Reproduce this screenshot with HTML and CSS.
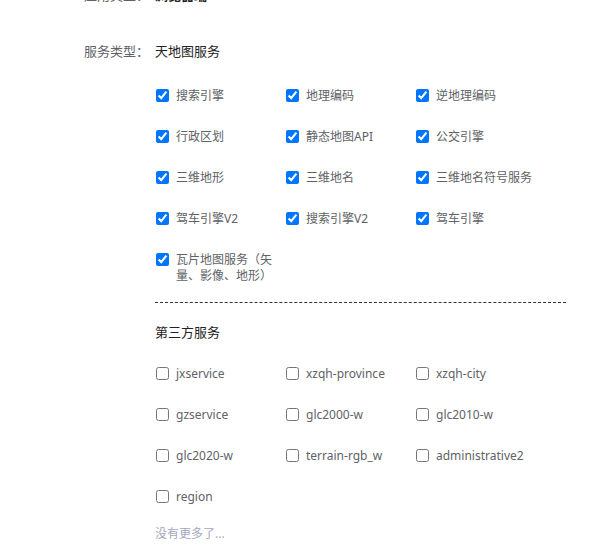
FILE: index.html
```html
<!DOCTYPE html>
<html lang="zh-CN">
<head>
<meta charset="utf-8">
<title>服务类型</title>
<link rel="stylesheet" href="styles.css">
</head>
<body>
<div class="form">
  <div class="field field-top">
    <div class="label">应用类型：</div>
    <div class="value strong">浏览器端</div>
  </div>

  <div class="field field-main">
    <div class="label">服务类型：</div>
    <div class="value">
      <div class="title">天地图服务</div>
      <div class="grid">
        <label class="cb"><input type="checkbox" checked><span>搜索引擎</span></label>
        <label class="cb"><input type="checkbox" checked><span>地理编码</span></label>
        <label class="cb"><input type="checkbox" checked><span>逆地理编码</span></label>
        <label class="cb"><input type="checkbox" checked><span>行政区划</span></label>
        <label class="cb"><input type="checkbox" checked><span>静态地图API</span></label>
        <label class="cb"><input type="checkbox" checked><span>公交引擎</span></label>
        <label class="cb"><input type="checkbox" checked><span>三维地形</span></label>
        <label class="cb"><input type="checkbox" checked><span>三维地名</span></label>
        <label class="cb"><input type="checkbox" checked><span>三维地名符号服务</span></label>
        <label class="cb"><input type="checkbox" checked><span>驾车引擎V2</span></label>
        <label class="cb"><input type="checkbox" checked><span>搜索引擎V2</span></label>
        <label class="cb"><input type="checkbox" checked><span>驾车引擎</span></label>
        <label class="cb"><input type="checkbox" checked><span>瓦片地图服务（矢量、影像、地形）</span></label>
      </div>
      <div class="divider"></div>
      <div class="title title-third">第三方服务</div>
      <div class="grid grid-third">
        <label class="cb"><input type="checkbox"><span>jxservice</span></label>
        <label class="cb"><input type="checkbox"><span>xzqh-province</span></label>
        <label class="cb"><input type="checkbox"><span>xzqh-city</span></label>
        <label class="cb"><input type="checkbox"><span>gzservice</span></label>
        <label class="cb"><input type="checkbox"><span>glc2000-w</span></label>
        <label class="cb"><input type="checkbox"><span>glc2010-w</span></label>
        <label class="cb"><input type="checkbox"><span>glc2020-w</span></label>
        <label class="cb"><input type="checkbox"><span>terrain-rgb_w</span></label>
        <label class="cb"><input type="checkbox"><span>administrative2</span></label>
        <label class="cb"><input type="checkbox"><span>region</span></label>
      </div>
      <div class="more">没有更多了...</div>
    </div>
  </div>
</div>
</body>
</html>
```

FILE: styles.css
```css
html, body {
  margin: 0;
  padding: 0;
  background: #ffffff;
}

body {
  font-family: "Noto Sans", "Noto Sans CJK SC", sans-serif;
  font-size: 13px;
  color: #606266;
  overflow: hidden;
}

.form {
  padding-left: 84px;
  margin-top: -15px;
}

.field {
  display: flex;
  align-items: flex-start;
}

.field-main {
  margin-top: 36px;
}

.label {
  width: 71px;
  line-height: 20px;
  color: #606266;
  white-space: nowrap;
}

.value {
  line-height: 20px;
  color: #222222;
}

.strong {
  font-weight: 700;
}

.title {
  line-height: 20px;
  color: #222222;
}

.grid {
  display: grid;
  grid-template-columns: repeat(3, 130px);
  row-gap: 25px;
  margin-top: 27px;
  padding-left: 1px;
}

.grid-third {
  margin-top: 24px;
}

.cb {
  display: flex;
  align-items: flex-start;
  gap: 7px;
  width: 120px;
  font-size: 12px;
  line-height: 16px;
  color: #606266;
  cursor: pointer;
}

.cb input {
  flex: none;
  width: 13px;
  height: 13px;
  margin: 1px 0 0 0;
}

.cb span {
  flex: 1;
  word-break: break-all;
}

.divider {
  width: 411px;
  margin-top: 18px;
  border-top: 1px dashed #333333;
}

.title-third {
  margin-top: 19px;
}

.more {
  margin-top: 21px;
  font-size: 12px;
  line-height: 16px;
  color: #a3a8bd;
}
```
